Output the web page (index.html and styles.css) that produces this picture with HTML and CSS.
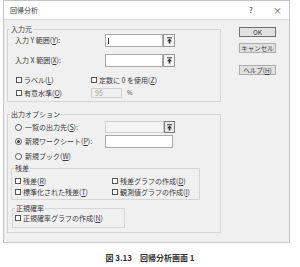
FILE: index.html
```html
<!DOCTYPE html>
<html lang="ja">
<head>
  <meta charset="UTF-8">
  <meta name="viewport" content="width=device-width, initial-scale=1.0">
  <title>回帰分析</title>
  <link rel="stylesheet" href="styles.css">
</head>
<body>
  <div class="dialog">
    <div class="titlebar">
      <span class="title">回帰分析</span>
      <span class="tb-help">?</span>
      <span class="tb-close">×</span>
    </div>
    <div class="body">
      <div class="left">
        <div class="group g-input">
          <div class="legend">入力元</div>
          <div class="row r-y">
            <span class="lbl">入力 Y 範囲(<u>Y</u>):</span>
            <div class="ref">
              <span class="field"><i class="caret"></i></span>
              <span class="refbtn"><svg width="7" height="7" viewBox="0 0 7 7"><path d="M1 0.8h5" stroke="#333" stroke-width="1"/><path d="M3.5 1.6L6 4.2H4.3V6.6H2.7V4.2H1Z" fill="#333"/></svg></span>
            </div>
          </div>
          <div class="row r-x">
            <span class="lbl">入力 X 範囲(<u>X</u>):</span>
            <div class="ref">
              <span class="field"></span>
              <span class="refbtn"><svg width="7" height="7" viewBox="0 0 7 7"><path d="M1 0.8h5" stroke="#333" stroke-width="1"/><path d="M3.5 1.6L6 4.2H4.3V6.6H2.7V4.2H1Z" fill="#333"/></svg></span>
            </div>
          </div>
          <div class="row r-check">
            <span class="opt w-label"><i class="box"></i>ラベル(<u>L</u>)</span>
            <span class="opt"><i class="box"></i>定数に 0 を使用(<u>Z</u>)</span>
          </div>
          <div class="row r-level">
            <span class="opt w-label"><i class="box"></i>有意水準(<u>O</u>)</span>
            <span class="level">95</span>
            <span class="pct">%</span>
          </div>
        </div>

        <div class="group g-output">
          <div class="legend">出力オプション</div>
          <div class="row r-dest">
            <span class="opt w-radio"><i class="radio"></i>一覧の出力先(<u>S</u>):</span>
            <div class="ref disabled">
              <span class="field"></span>
              <span class="refbtn"><svg width="7" height="7" viewBox="0 0 7 7"><path d="M1 0.8h5" stroke="#333" stroke-width="1"/><path d="M3.5 1.6L6 4.2H4.3V6.6H2.7V4.2H1Z" fill="#333"/></svg></span>
            </div>
          </div>
          <div class="row r-sheet">
            <span class="opt w-radio"><i class="radio on"></i>新規ワークシート(<u>P</u>):</span>
            <span class="field wide"></span>
          </div>
          <div class="row r-book">
            <span class="opt"><i class="radio"></i>新規ブック(<u>W</u>)</span>
          </div>

          <div class="group g-resid">
            <div class="legend">残差</div>
            <div class="row r-res1">
              <span class="opt w-res"><i class="box"></i>残差(<u>R</u>)</span>
              <span class="opt"><i class="box"></i>残差グラフの作成(<u>D</u>)</span>
            </div>
            <div class="row r-res2">
              <span class="opt w-res"><i class="box"></i>標準化された残差(<u>T</u>)</span>
              <span class="opt"><i class="box"></i>観測値グラフの作成(<u>I</u>)</span>
            </div>
          </div>

          <div class="group g-normal">
            <div class="legend">正規確率</div>
            <div class="row r-norm">
              <span class="opt"><i class="box"></i>正規確率グラフの作成(<u>N</u>)</span>
            </div>
          </div>
        </div>
      </div>

      <div class="buttons">
        <span class="btn default">OK</span>
        <span class="btn cancel">キャンセル</span>
        <span class="btn help">ヘルプ(<u>H</u>)</span>
      </div>
    </div>
  </div>
  <p class="caption">図 3.13　回帰分析画面 1</p>
</body>
</html>
```

FILE: styles.css
```css
* {
  box-sizing: border-box;
}
body {
  margin: 0;
  background: #fff;
  font-family: "Noto Sans CJK JP", "Noto Sans", sans-serif;
  color: #3a3a3a;
  font-size: 7px;
  line-height: 1;
}
u {
  text-decoration: underline;
  text-underline-offset: 1px;
}
.dialog {
  margin-left: 3px;
  width: 287px;
  height: 243px;
  border: 1px solid #c4c4c4;
  background: #f0f0f0;
  display: flex;
  flex-direction: column;
}
.titlebar {
  flex: none;
  height: 19px;
  background: #fff;
  border-bottom: 1px solid #dcdcdc;
  display: flex;
  align-items: center;
  padding-left: 6px;
}
.title {
  flex: 1;
}
.tb-help {
  font-size: 8px;
  width: 24px;
}
.tb-close {
  font-size: 9px;
  width: 16px;
  color: #555;
}
.body {
  flex: 1;
  display: flex;
}
.left {
  margin-left: 3px;
}

.group {
  border: 1px solid #d6d6d6;
}
.legend {
  width: fit-content;
  height: 8px;
  line-height: 8px;
  margin: -5px 0 0 2px;
  padding: 0 1px;
  background: #f0f0f0;
}
.row {
  display: flex;
  align-items: center;
}

.g-input {
  margin-top: 9px;
  width: 214px;
  padding-bottom: 3px;
}
.r-y {
  margin-top: 1px;
  height: 13px;
  padding-left: 7px;
}
.r-x {
  margin-top: 7px;
  height: 13px;
  padding-left: 7px;
}
.lbl {
  width: 90px;
}
.ref {
  display: flex;
  width: 70px;
  height: 13px;
}
.field {
  display: block;
  position: relative;
  flex: 1;
  height: 100%;
  background: #fff;
  border: 1px solid #a9a9a9;
}
.caret {
  position: absolute;
  left: 2px;
  top: 3px;
  width: 1px;
  height: 6px;
  background: #333;
}
.refbtn {
  width: 12px;
  height: 100%;
  border: 1px solid #9a9a9a;
  background: #f4f4f4;
  display: flex;
  align-items: center;
  justify-content: center;
}
.ref.disabled {
  height: 12px;
}
.ref.disabled .field {
  background: #f4f4f4;
  border-color: #cfcfcf;
}
.ref.disabled .refbtn {
  width: 11px;
  border-color: #7c7c7c;
  background: #e8e8e8;
}

.opt {
  display: flex;
  align-items: center;
  white-space: nowrap;
}
.box {
  width: 6px;
  height: 6px;
  border: 1px solid #555;
  background: #fff;
  margin-right: 2px;
}
.radio {
  width: 7px;
  height: 7px;
  border: 1px solid #555;
  border-radius: 50%;
  background: #fff;
  margin-right: 3px;
  display: flex;
  align-items: center;
  justify-content: center;
}
.radio.on::after {
  content: "";
  width: 3px;
  height: 3px;
  border-radius: 50%;
  background: #333;
}

.r-check {
  margin-top: 8px;
  height: 10px;
  padding-left: 8px;
}
.w-label {
  width: 75px;
}
.r-level {
  margin-top: 3px;
  height: 10px;
  padding-left: 8px;
}
.level {
  width: 31px;
  height: 10px;
  border: 1px solid #cfcfcf;
  background: #f0f0f0;
  color: #9a9a9a;
  padding-left: 3px;
  display: flex;
  align-items: center;
}
.pct {
  margin-left: 5px;
  font-size: 6px;
}

.g-output {
  margin-top: 12px;
  width: 214px;
  padding-bottom: 4px;
}
.r-dest {
  margin-top: 3px;
  height: 12px;
  padding-left: 7px;
}
.w-radio {
  width: 90px;
}
.r-sheet {
  margin-top: 2px;
  height: 13px;
  padding-left: 7px;
}
.field.wide {
  flex: none;
  width: 68px;
}
.r-book {
  margin-top: 3px;
  height: 10px;
  padding-left: 7px;
}

.g-resid {
  margin: 7px 0 0 3px;
  width: 189px;
  padding-bottom: 2px;
}
.r-res1 {
  margin-top: 4px;
  height: 10px;
  padding-left: 3px;
}
.r-res2 {
  margin-top: 1px;
  height: 10px;
  padding-left: 3px;
}
.w-res {
  width: 97px;
}

.g-normal {
  margin: 8px 0 0 4px;
  width: 113px;
  padding-bottom: 4px;
}
.r-norm {
  margin-top: 1px;
  height: 10px;
  padding-left: 2px;
}

.buttons {
  margin: 7px 0 0 18px;
  display: flex;
  flex-direction: column;
}
.btn {
  width: 37px;
  height: 10px;
  border: 1px solid #adadad;
  background: #e1e1e1;
  display: flex;
  align-items: center;
  justify-content: center;
  font-size: 6.5px;
}
.btn.default {
  border-color: #6f6f6f;
}
.btn.cancel {
  margin-top: 6px;
}
.btn.help {
  margin-top: 12px;
}

.caption {
  margin: 10px 0 0;
  text-align: center;
  font-size: 8px;
  line-height: 10px;
  font-weight: bold;
  color: #333;
}
```
